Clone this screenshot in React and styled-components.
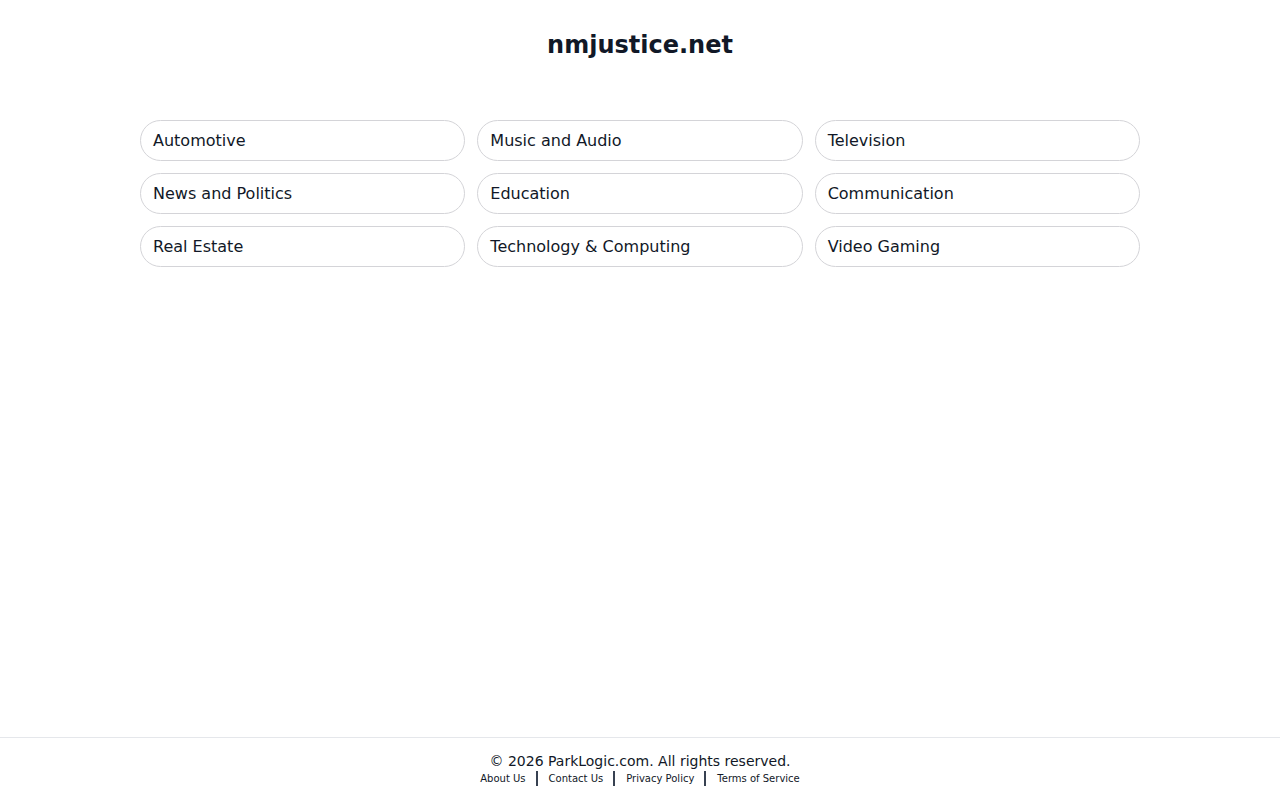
import React from "react";
import styled, { createGlobalStyle } from "styled-components";

const GlobalStyle = createGlobalStyle`
  html, body {
    margin: 0;
    padding: 0;
    background: #ffffff;
    font-family: "DejaVu Sans", Verdana, sans-serif;
    color: #111827;
  }
`;

const Page = styled.div`
  min-height: 100vh;
  display: flex;
  flex-direction: column;
`;

const Main = styled.main`
  flex: 1;
  display: flex;
  flex-direction: column;
  align-items: center;
`;

const Title = styled.h1`
  margin: 31px 0 0;
  font-size: 24px;
  line-height: 29px;
  font-weight: 700;
  color: #111827;
`;

const Grid = styled.div`
  margin-top: 60px;
  width: 1000px;
  display: grid;
  grid-template-columns: repeat(3, 1fr);
  column-gap: 12px;
  row-gap: 12px;
`;

const Pill = styled.a`
  display: flex;
  align-items: center;
  height: 41px;
  box-sizing: border-box;
  padding: 0 12px;
  border: 1px solid #d4d4d8;
  border-radius: 999px;
  font-size: 16px;
  color: #111827;
  text-decoration: none;
  cursor: pointer;
`;

const Footer = styled.footer`
  border-top: 1px solid #e5e7eb;
  padding: 14px 0 13px;
  display: flex;
  flex-direction: column;
  align-items: center;
`;

const Copy = styled.div`
  font-size: 14px;
  line-height: 18px;
  color: #111827;
`;

const Links = styled.nav`
  display: flex;
  align-items: center;
  margin-top: 1px;
`;

const FootLink = styled.a`
  font-size: 10px;
  line-height: 16px;
  color: #111827;
  text-decoration: none;
  padding: 0 11px 0 12px;
  position: relative;
  &:first-child {
    padding-left: 0;
  }
  &:last-child {
    padding-right: 0;
  }
  & + &::before {
    content: "";
    position: absolute;
    left: -1px;
    top: 0;
    height: 15px;
    width: 2px;
    background: #374151;
  }
`;

const categories = [
  "Automotive",
  "Music and Audio",
  "Television",
  "News and Politics",
  "Education",
  "Communication",
  "Real Estate",
  "Technology & Computing",
  "Video Gaming",
];

const footerLinks = ["About Us", "Contact Us", "Privacy Policy", "Terms of Service"];

export default function App() {
  return (
    <Page>
      <GlobalStyle />
      <Main>
        <Title>nmjustice.net</Title>
        <Grid>
          {categories.map((c) => (
            <Pill key={c}>{c}</Pill>
          ))}
        </Grid>
      </Main>
      <Footer>
        <Copy>© 2026 ParkLogic.com. All rights reserved.</Copy>
        <Links>
          {footerLinks.map((l) => (
            <FootLink key={l}>{l}</FootLink>
          ))}
        </Links>
      </Footer>
    </Page>
  );
}
